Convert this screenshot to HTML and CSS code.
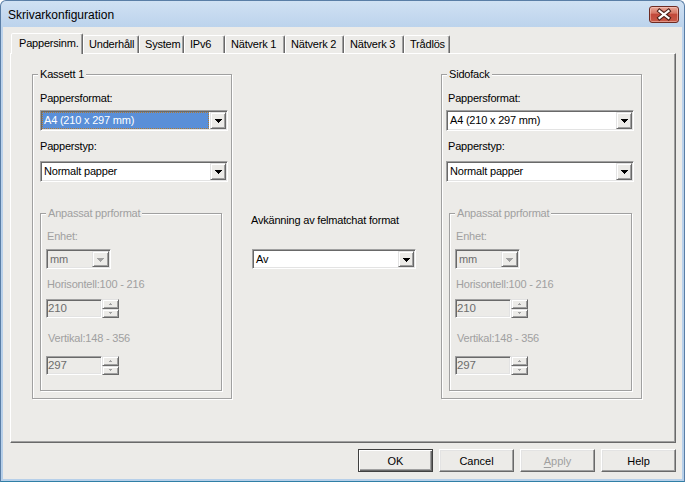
FILE: index.html
```html
<!DOCTYPE html>
<html lang="sv">
<head>
<meta charset="utf-8">
<title>Skrivarkonfiguration</title>
<link rel="stylesheet" href="styles.css">
</head>
<body>
<div class="window">
  <div class="titlebar">
    <span class="title">Skrivarkonfiguration</span>
    <div class="close">
      <svg width="28" height="15" viewBox="0 0 28 15">
        <path d="M9.5 4 L18.5 11 M18.5 4 L9.5 11" stroke="#4b2019" stroke-width="4.2" stroke-linecap="square" fill="none"/>
        <path d="M9.5 4 L18.5 11 M18.5 4 L9.5 11" stroke="#ffffff" stroke-width="2.2" stroke-linecap="square" fill="none"/>
      </svg>
    </div>
  </div>
  <div class="client">
    <div class="tabs">
      <div class="tab tab-active">Pappersinm.</div>
      <div class="tab">Underhåll</div>
      <div class="tab">System</div>
      <div class="tab">IPv6</div>
      <div class="tab">Nätverk 1</div>
      <div class="tab">Nätverk 2</div>
      <div class="tab">Nätverk 3</div>
      <div class="tab">Trådlös</div>
    </div>
    <div class="panel">
      <div class="group group-outer">
        <div class="group-title">Kassett 1</div>
        <div class="label">Pappersformat:</div>
        <div class="combo combo-wide">
          <div class="combo-value combo-selected">A4 (210 x 297 mm)</div>
          <div class="drop"><svg class="arrow" width="7" height="4" viewBox="0 0 7 4"><path d="M0 0h7v1h-1v1h-1v1h-1v1h-1v-1h-1v-1h-1v-1h-1z"/></svg></div>
        </div>
        <div class="label label-gap">Papperstyp:</div>
        <div class="combo combo-wide combo-second">
          <div class="combo-value">Normalt papper</div>
          <div class="drop"><svg class="arrow" width="7" height="4" viewBox="0 0 7 4"><path d="M0 0h7v1h-1v1h-1v1h-1v1h-1v-1h-1v-1h-1v-1h-1z"/></svg></div>
        </div>
        <div class="group group-inner">
          <div class="group-title disabled-text">Anpassat pprformat</div>
          <div class="label disabled-text">Enhet:</div>
          <div class="combo combo-small combo-disabled">
            <div class="combo-value">mm</div>
            <div class="drop drop-small"><svg class="arrow arrow-disabled" width="7" height="4" viewBox="0 0 7 4"><path d="M0 0h7v1h-1v1h-1v1h-1v1h-1v-1h-1v-1h-1v-1h-1z"/></svg></div>
          </div>
          <div class="label disabled-text label-h">Horisontell:100 - 216</div>
          <div class="spin spin-first">
            <div class="spin-input">210</div>
            <div class="spin-btns">
              <div class="spin-btn"><svg width="3" height="2" viewBox="0 0 3 2"><path d="M1 0h1v1h1v1h-3v-1h1z"/></svg></div>
              <div class="spin-btn"><svg width="3" height="2" viewBox="0 0 3 2"><path d="M0 0h3v1h-1v1h-1v-1h-1z"/></svg></div>
            </div>
          </div>
          <div class="label disabled-text label-v">Vertikal:148 - 356</div>
          <div class="spin spin-second">
            <div class="spin-input">297</div>
            <div class="spin-btns">
              <div class="spin-btn"><svg width="3" height="2" viewBox="0 0 3 2"><path d="M1 0h1v1h1v1h-3v-1h1z"/></svg></div>
              <div class="spin-btn"><svg width="3" height="2" viewBox="0 0 3 2"><path d="M0 0h3v1h-1v1h-1v-1h-1z"/></svg></div>
            </div>
          </div>
        </div>
      </div>

      <div class="middle">
        <div class="label">Avkänning av felmatchat format</div>
        <div class="combo combo-mid">
          <div class="combo-value">Av</div>
          <div class="drop"><svg class="arrow" width="7" height="4" viewBox="0 0 7 4"><path d="M0 0h7v1h-1v1h-1v1h-1v1h-1v-1h-1v-1h-1v-1h-1z"/></svg></div>
        </div>
      </div>

      <div class="group group-outer group-right">
        <div class="group-title">Sidofack</div>
        <div class="label">Pappersformat:</div>
        <div class="combo combo-wide">
          <div class="combo-value">A4 (210 x 297 mm)</div>
          <div class="drop"><svg class="arrow" width="7" height="4" viewBox="0 0 7 4"><path d="M0 0h7v1h-1v1h-1v1h-1v1h-1v-1h-1v-1h-1v-1h-1z"/></svg></div>
        </div>
        <div class="label label-gap">Papperstyp:</div>
        <div class="combo combo-wide combo-second">
          <div class="combo-value">Normalt papper</div>
          <div class="drop"><svg class="arrow" width="7" height="4" viewBox="0 0 7 4"><path d="M0 0h7v1h-1v1h-1v1h-1v1h-1v-1h-1v-1h-1v-1h-1z"/></svg></div>
        </div>
        <div class="group group-inner">
          <div class="group-title disabled-text">Anpassat pprformat</div>
          <div class="label disabled-text">Enhet:</div>
          <div class="combo combo-small combo-disabled">
            <div class="combo-value">mm</div>
            <div class="drop drop-small"><svg class="arrow arrow-disabled" width="7" height="4" viewBox="0 0 7 4"><path d="M0 0h7v1h-1v1h-1v1h-1v1h-1v-1h-1v-1h-1v-1h-1z"/></svg></div>
          </div>
          <div class="label disabled-text label-h">Horisontell:100 - 216</div>
          <div class="spin spin-first">
            <div class="spin-input">210</div>
            <div class="spin-btns">
              <div class="spin-btn"><svg width="3" height="2" viewBox="0 0 3 2"><path d="M1 0h1v1h1v1h-3v-1h1z"/></svg></div>
              <div class="spin-btn"><svg width="3" height="2" viewBox="0 0 3 2"><path d="M0 0h3v1h-1v1h-1v-1h-1z"/></svg></div>
            </div>
          </div>
          <div class="label disabled-text label-v">Vertikal:148 - 356</div>
          <div class="spin spin-second">
            <div class="spin-input">297</div>
            <div class="spin-btns">
              <div class="spin-btn"><svg width="3" height="2" viewBox="0 0 3 2"><path d="M1 0h1v1h1v1h-3v-1h1z"/></svg></div>
              <div class="spin-btn"><svg width="3" height="2" viewBox="0 0 3 2"><path d="M0 0h3v1h-1v1h-1v-1h-1z"/></svg></div>
            </div>
          </div>
        </div>
      </div>
    </div>
    <div class="buttons">
      <div class="btn btn-default">OK</div>
      <div class="btn">Cancel</div>
      <div class="btn btn-disabled"><span><u>A</u>pply</span></div>
      <div class="btn">Help</div>
    </div>
  </div>
</div>
</body>
</html>
```

FILE: styles.css
```css
* {
  box-sizing: border-box;
}

html, body {
  margin: 0;
  padding: 0;
  background: #ffffff;
}

body {
  font-family: "Liberation Sans", Arial, sans-serif;
  font-size: 11px;
  letter-spacing: -0.2px;
  color: #000000;
}

.window {
  width: 685px;
  height: 482px;
  border: 1px solid #5a7ea6;
  border-bottom-color: #2f7fa6;
  border-radius: 6px 6px 0 0;
  background: linear-gradient(#d0e1f3 0px, #bcd3ec 26px, #b6cfe9 100%);
  padding: 0 2px 2px;
  display: flex;
  flex-direction: column;
  overflow: hidden;
}

.titlebar {
  height: 26px;
  display: flex;
  align-items: center;
  padding-left: 5px;
}

.title {
  flex: 1;
  font-size: 12px;
  letter-spacing: 0;
  color: #000000;
  padding-top: 1px;
}

.close {
  width: 30px;
  height: 17px;
  margin-right: 3px;
  margin-top: 1px;
  border: 1px solid #6e2b22;
  border-radius: 3px;
  background: linear-gradient(#e8a697 0%, #d77a68 40%, #c2493a 50%, #c85a48 100%);
  box-shadow: inset 0 0 0 1px rgba(255, 220, 210, 0.45);
  display: flex;
  align-items: center;
  justify-content: center;
}

.close svg {
  display: block;
}

.client {
  flex: 1;
  background: #ecebe8;
  padding: 6px 0 0 7px;
  border-top: 0;
}

/* Tabs */
.tabs {
  display: flex;
  align-items: flex-end;
  height: 20px;
  padding-left: 1px;
  position: relative;
  z-index: 1;
}

.tab {
  height: 18px;
  line-height: 17px;
  padding-left: 5px;
  border: 1px solid;
  border-bottom: 0;
  border-color: #ffffff #696969 transparent #ffffff;
  box-shadow: inset -1px 0 0 #a0a0a0;
  border-radius: 2px 2px 0 0;
  background: #ecebe8;
  white-space: nowrap;
}

.tab:nth-child(1) { width: 72px; }
.tab:nth-child(2) { width: 56px; }
.tab:nth-child(3) { width: 45px; }
.tab:nth-child(4) { width: 41px; }
.tab:nth-child(5) { width: 60px; }
.tab:nth-child(6) { width: 59px; }
.tab:nth-child(7) { width: 60px; }
.tab:nth-child(8) { width: 46px; }

.tab-active {
  height: 21px;
  line-height: 18px;
  margin-bottom: -1px;
  padding-left: 7px;
}

/* Panel */
.panel {
  width: 666px;
  height: 390px;
  border: 1px solid;
  border-color: #ffffff #696969 #696969 #ffffff;
  box-shadow: inset -1px -1px 0 #a0a0a0;
  display: flex;
  align-items: flex-start;
  padding: 20px 0 0 21px;
}

/* Group boxes */
.group {
  position: relative;
  border: 1px solid #a0a0a0;
  box-shadow: inset 1px 1px 0 #ffffff, 1px 1px 0 #ffffff;
}

.group-outer {
  width: 200px;
  height: 325px;
  padding: 16px 0 0 7px;
}

.group-right {
  width: 201px;
  margin-left: 24px;
}

.group-right > .combo {
  margin-left: -3px;
}

.group-right > .label {
  margin-left: -1px;
}

.group-title {
  position: absolute;
  top: -8px;
  left: 5px;
  padding: 0 2px;
  line-height: 14px;
  background: #ecebe8;
  white-space: nowrap;
}

.group-inner {
  width: 182px;
  height: 178px;
  margin-top: 31px;
  padding: 15px 0 0 6px;
}

.group-right .group-inner {
  width: 183px;
}

.label {
  line-height: 14px;
  white-space: nowrap;
}

.disabled-text {
  color: #a0a0a0;
}

.label-gap {
  margin-top: 8px;
}

.label-h {
  margin-top: 8px;
}

.label-v {
  margin-top: 13px;
  padding-left: 1px;
}

/* Combo boxes */
.combo {
  display: flex;
  height: 21px;
  border: 1px solid;
  border-color: #a0a0a0 #ffffff #ffffff #a0a0a0;
  box-shadow: inset 1px 1px 0 #696969, inset -1px -1px 0 #e3e3e3;
  background: #ffffff;
  padding: 1px;
  margin-top: 5px;
}

.combo-second {
  margin-top: 8px;
}

.combo-wide {
  width: 188px;
}

.combo-value {
  flex: 1;
  padding-left: 2px;
  line-height: 17px;
  white-space: nowrap;
  overflow: hidden;
}

.combo-selected {
  background: #5a8fd8;
  color: #ffffff;
  border: 1px dotted #b07a30;
  line-height: 15px;
  padding-left: 1px;
  margin-right: 1px;
}

.drop {
  width: 16px;
  border: 1px solid;
  border-color: #e3e3e3 #696969 #696969 #e3e3e3;
  box-shadow: inset 1px 1px 0 #ffffff, inset -1px -1px 0 #a0a0a0;
  background: #ecebe8;
  display: flex;
  align-items: center;
  justify-content: center;
  padding-top: 1px;
}

.arrow {
  display: block;
  fill: #000000;
}

.arrow-disabled {
  fill: #a0a0a0;
}

.combo-small {
  width: 65px;
  height: 20px;
  margin-top: 6px;
  margin-left: -1px;
}

.combo-small .combo-value {
  line-height: 16px;
}

.drop-small {
  width: 17px;
}

.combo-disabled {
  background: #ecebe8;
}

.combo-disabled .combo-value {
  color: #6d6d6d;
}

.middle {
  width: 166px;
  margin-left: 19px;
  margin-top: 139px;
}

.combo-mid {
  width: 164px;
  height: 20px;
  margin-top: 22px;
  margin-left: 1px;
}

.combo-mid .combo-value {
  line-height: 16px;
}

/* Spin controls */
.spin {
  display: flex;
  height: 19px;
  margin-left: -1px;
}

.spin-first {
  margin-top: 8px;
}

.spin-second {
  margin-top: 11px;
}

.spin-input {
  width: 56px;
  border: 1px solid;
  border-color: #a0a0a0 #ffffff #ffffff #a0a0a0;
  box-shadow: inset 1px 1px 0 #696969, inset -1px -1px 0 #e3e3e3;
  background: #ecebe8;
  color: #6d6d6d;
  padding-left: 1px;
  line-height: 17px;
  font-size: 11.5px;
}

.spin-btns {
  width: 17px;
  display: flex;
  flex-direction: column;
}

.spin-btn {
  flex: 1;
  border: 1px solid;
  border-color: #e3e3e3 #696969 #696969 #e3e3e3;
  box-shadow: inset 1px 1px 0 #ffffff, inset -1px -1px 0 #a0a0a0;
  background: #ecebe8;
  display: flex;
  align-items: center;
  justify-content: center;
}

.spin-btn svg {
  display: block;
  fill: #a0a0a0;
}

/* Buttons */
.buttons {
  width: 666px;
  display: flex;
  justify-content: flex-end;
  gap: 6px;
  margin-top: 6px;
}

.btn {
  width: 75px;
  height: 23px;
  border: 1px solid;
  border-color: #ffffff #696969 #696969 #ffffff;
  box-shadow: inset -1px -1px 0 #a0a0a0, inset 1px 1px 0 #e3e3e3;
  background: #ecebe8;
  display: flex;
  align-items: center;
  justify-content: center;
  letter-spacing: 0;
}

.btn-default {
  border-color: #404040;
  box-shadow: inset 1px 1px 0 #ffffff, inset -1px -1px 0 #696969, inset -2px -2px 0 #a0a0a0;
}

.btn-disabled {
  color: #a0a0a0;
}

.btn-disabled u {
  text-decoration-thickness: 1px;
  text-underline-offset: 2px;
}
```
